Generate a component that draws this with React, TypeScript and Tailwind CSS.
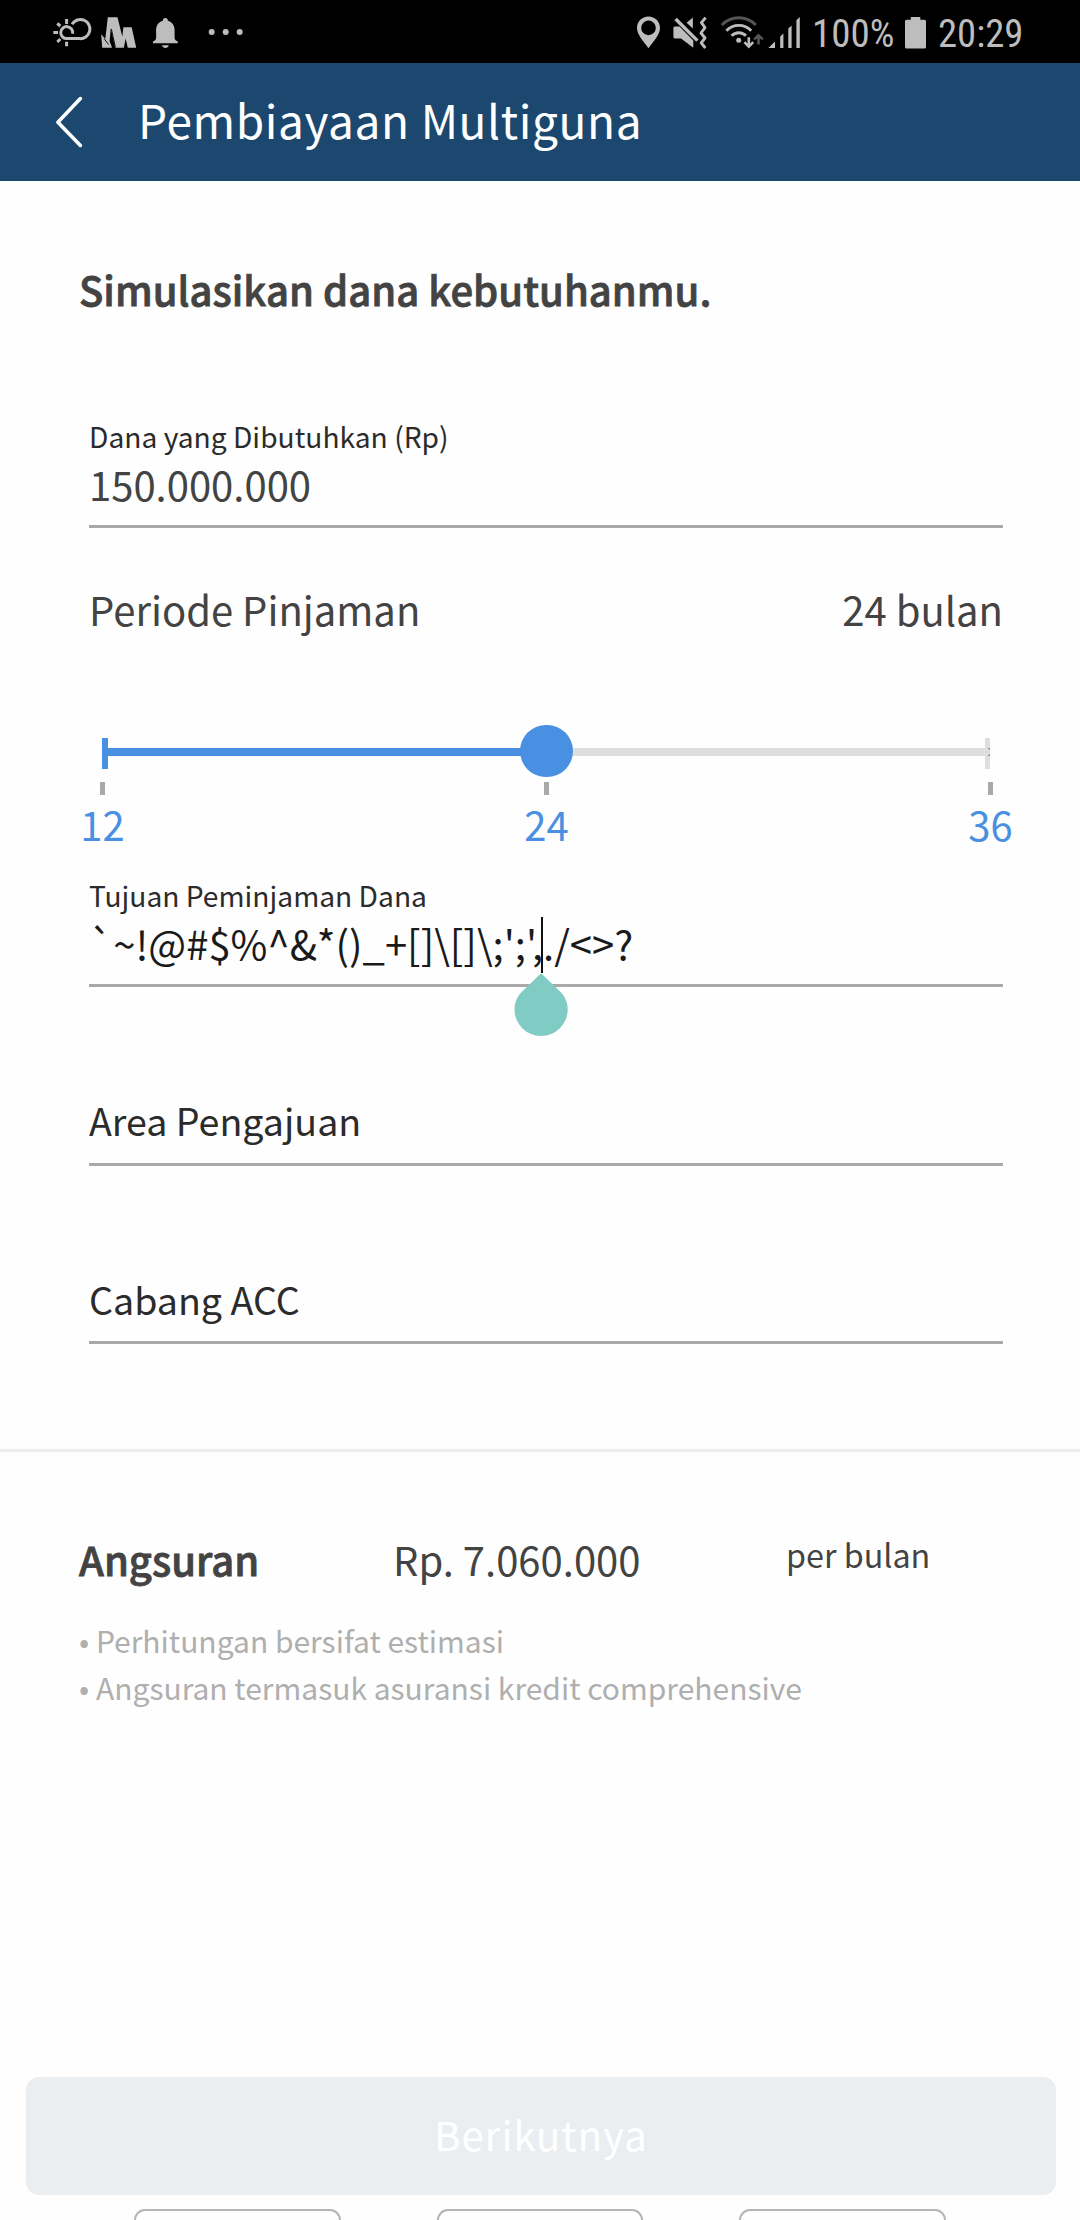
import React from "react";

const BLUE = "#4a90e2";

function StatusLeftIcons() {
  return (
    <svg width="200" height="63" viewBox="50 0 200 63" fill="#bdbdbd">
      {/* weather: sun behind cloud */}
      <g fill="none" stroke="#bdbdbd" strokeWidth="3">
        <path d="M72 24.3 A9.6 9.6 0 1 1 79.2 38.6 H67 A6 6 0 1 1 72.6 33.8" />
        <path d="M66.6 19 V24 M53.3 32.6 H58 M57.3 23.3 L60.3 26.2 M57.3 42 L60.3 39 M66.6 41.7 V46.3" />
      </g>
      {/* stylised peaks */}
      <path d="M101.2 34.3 L105.3 39 L107.8 17.2 H117.5 L122.3 36.8 L123.4 27.2 H131.7 L136.2 47.8 H127.8 L125.6 38.5 L123.9 47.8 H115.2 L110.8 28 L109.6 41 L112 47.8 H102.2 Z" />
      <path d="M104 38.6 L108.6 44.5" stroke="#000" strokeWidth="0.9" />
      <path d="M111.4 29 L115.4 47.5" stroke="#000" strokeWidth="0.9" />
      {/* bell */}
      <path d="M165.3 18 C166.9 18 167.9 19.2 167.9 20.7 C172 21.8 174.6 25.2 174.6 30 V37.8 C174.6 39.6 175.6 40.8 177.8 41.6 V43.2 H153 V41.6 C155.1 40.8 156.1 39.6 156.1 37.8 V30 C156.1 25.2 158.7 21.8 162.8 20.7 C162.8 19.2 163.8 18 165.3 18 Z" />
      <path d="M162 45.2 H168.8 C168.3 47 167 48 165.4 48 C163.8 48 162.5 47 162 45.2 Z" />
      <circle cx="211.7" cy="32.1" r="3" />
      <circle cx="225.7" cy="32.1" r="3" />
      <circle cx="239.7" cy="32.1" r="3" />
    </svg>
  );
}

function StatusRightIcons() {
  return (
    <svg width="170" height="63" viewBox="632 0 170 63" fill="#bdbdbd">
      {/* location pin */}
      <path
        fillRule="evenodd"
        d="M647.5 16.4 C654 16.4 659 21.4 659 27.8 C659 34.6 653.5 40.2 647.5 48.3 C641.5 40.2 636 34.6 636 27.8 C636 21.4 641 16.4 647.5 16.4 Z M647.5 20.6 A7.3 7.3 0 1 0 647.5 35.2 A7.3 7.3 0 1 0 647.5 20.6 Z"
      />
      {/* muted speaker with vibration */}
      <path d="M674 26.6 H678.5 L692.3 40.4 V47.8 L680 38.4 H674 C673 38.4 672.4 37.8 672.4 36.8 V28.2 C672.4 27.2 673 26.6 674 26.6 Z" />
      <path d="M685.6 22.8 L691.9 17.4 V28.6 Z" />
      <path d="M674.6 19 L696.4 40.6" stroke="#bdbdbd" strokeWidth="3.4" />
      <path
        d="M704.6 17.6 L700.4 22.6 L704 27.6 L700 33 L704 38 L700.2 42.8 L704.4 48"
        fill="none"
        stroke="#bdbdbd"
        strokeWidth="2.9"
        strokeLinejoin="round"
      />
      {/* wifi with traffic arrows */}
      <g fill="none" stroke="#bdbdbd" strokeWidth="2.9">
        <path d="M720.8 25 A23.5 23.5 0 0 1 754.8 25" stroke="#555555" />
        <path d="M725.4 30.7 A17 17 0 0 1 750.2 30.7" />
        <path d="M730.6 35.8 A10 10 0 0 1 745 35.8" />
        <path d="M747.8 37.2 V46 M743.4 42.2 L747.8 46.6 L752.2 42.2" strokeWidth="2.6" />
        <path d="M757.5 44.6 V36 M753.2 39.4 L757.5 35.2 L761.8 39.4" stroke="#555555" strokeWidth="2.6" />
      </g>
      <circle cx="737.7" cy="40.2" r="2.5" />
      {/* mobile signal */}
      <path d="M767.3 48 L774 41.6 V48 Z M779.2 36.6 L782.4 33.6 V48 H779.2 Z M787.3 28.6 L790.6 25.6 V48 H787.3 Z M795.4 20.2 L798.8 17 V48 H795.4 Z" />
    </svg>
  );
}

function StatusBar() {
  return (
    <div className="flex h-[63px] items-center bg-black pl-[50px] text-[#bdbdbd]">
      <StatusLeftIcons />
      <div className="ml-auto flex items-center pr-[60px]">
        <StatusRightIcons />
        <span className="ml-[9px] w-[93px] pt-[6px] font-['Roboto_Condensed','Roboto',sans-serif] text-[39px] leading-none">
          100%
        </span>
        <svg width="22" height="63" viewBox="904 0 22 63" fill="#bdbdbd" className="mr-[11px]">
          <path d="M909.8 17 H919.3 V19.8 H923.5 Q925 19.8 925 21.3 V47 Q925 48.6 923.5 48.6 H905.5 Q904 48.6 904 47 V21.3 Q904 19.8 905.5 19.8 H909.8 Z" />
        </svg>
        <span className="w-[82px] pt-[6px] font-['Roboto_Condensed','Roboto',sans-serif] text-[38.7px] leading-none">
          20:29
        </span>
      </div>
    </div>
  );
}

function Header() {
  return (
    <header className="flex h-[118px] items-center bg-[#1c4870] pl-[54px] text-white">
      <svg width="32" height="56" viewBox="54 94 32 56" fill="none" className="block">
        <path
          d="M80.4 98.6 L57.9 122.2 L80.4 145.4"
          stroke="#fff"
          strokeWidth="3.6"
          strokeLinecap="round"
          strokeLinejoin="round"
        />
      </svg>
      <h1 className="-mt-[7px] ml-[52px] text-[46px] leading-[68px] font-normal tracking-[0.6px]">
        Pembiayaan Multiguna
      </h1>
    </header>
  );
}

function FilledField({ label, children }: { label: string; children: React.ReactNode }) {
  return (
    <div className="flex h-[112px] flex-col border-b-[3px] border-[#a9a9a9]">
      <span className="text-[28.2px] leading-[40px] text-[#2b2b2b]">{label}</span>
      <div className="mt-[3px] text-[40px] leading-[50px] whitespace-nowrap">{children}</div>
    </div>
  );
}

function EmptyField({ label, className }: { label: string; className: string }) {
  return (
    <div
      className={`border-b-[3px] border-[#a9a9a9] text-[37.6px] leading-[50px] text-[#2b2b2b] ${className}`}
    >
      {label}
    </div>
  );
}

function Slider() {
  return (
    <div className="-mr-[12px] -ml-[11px] pt-[86px]">
      <div className="relative mr-[25px] ml-[24px] flex h-[52px] items-start">
        <div className="mt-[13px] h-[31px] w-[6px] bg-[#4a90e2]" />
        <div className="mt-[23px] h-[8px] w-[438px] bg-[#4a90e2]" />
        <div className="mt-[23px] h-[8px] flex-1 bg-[#dedede]" />
        <div className="mt-[13px] h-[31px] w-[5px] bg-[#dedede] pt-[10px]">
          <svg width="5" height="8" viewBox="0 0 5 8" className="block" fill={BLUE}>
            <path d="M2.6 0 H5 V2 Z M2.6 8 H5 V6 Z" />
          </svg>
        </div>
        <div className="absolute top-0 left-[418px] h-[52px] w-[53px] rounded-full bg-[#4a90e2]" />
      </div>
      <div className="mt-[5px] flex justify-between text-[40px] leading-[50px] text-[#4a90e2]">
        {["12", "24", "36"].map((n) => (
          <div key={n} className="flex w-[49px] flex-col items-center">
            <div className="h-[13px] w-[5px] bg-[#a9a9a9]" />
            <span className="mt-[4px]">{n}</span>
          </div>
        ))}
      </div>
    </div>
  );
}

export default function App() {
  return (
    <div className="flex h-[2220px] w-[1080px] flex-col overflow-hidden bg-[#fefefe] font-['Noto_Sans_CJK_JP','Noto_Sans',sans-serif] text-[#434343]">
      <StatusBar />
      <Header />

      <main className="flex flex-col pt-[78px]">
        <h2 className="pl-[79px] text-[40px] leading-[60px] font-medium tracking-[0.04px] [-webkit-text-stroke:0.8px_#434343]">
          Simulasikan dana kebutuhanmu.
        </h2>

        <section className="mt-[97px] mr-[77px] ml-[89px] flex flex-col">
          <FilledField label="Dana yang Dibutuhkan (Rp)">150.000.000</FilledField>

          <div className="mt-[51px] flex justify-between text-[40px] leading-[60px]">
            <span>Periode Pinjaman</span>
            <span>24 bulan</span>
          </div>

          <Slider />

          <div className="relative mt-[26px]">
            <FilledField label="Tujuan Peminjaman Dana">
              <span className="text-[#1a1a1a]">{"`~!@#$%^&*()_+[]\\[]\\;';',./<>?"}</span>
            </FilledField>
            {/* text caret and its drag handle */}
            <div className="absolute top-[42px] left-[452px] h-[56px] w-[2px] bg-[#111111]" />
            <svg
              width="54"
              height="64"
              viewBox="513.5 973 54 64"
              className="absolute top-[98px] left-[424.5px]"
              fill="#80cbc4"
            >
              <path d="M540.6 973.3 L560.3 992.2 C565 997.2 567.2 1003.2 567.2 1009.4 A26.6 26.6 0 0 1 514 1009.4 C514 1003.2 516.2 997.2 520.9 992.2 Z" />
            </svg>
          </div>

          <EmptyField label="Area Pengajuan" className="mt-[108px] h-[71px]" />
          <EmptyField label="Cabang ACC" className="mt-[108px] h-[70px]" />
        </section>

        <div className="mt-[105px] h-[3px] bg-[#ececec]" />

        <section className="mt-[77px] pl-[79px]">
          <div className="flex text-[40px] leading-[60px]">
            <span className="w-[314px] font-medium [-webkit-text-stroke:0.8px_#434343]">Angsuran</span>
            <span className="w-[393px]">Rp. 7.060.000</span>
            <span className="-mt-[5px] text-[32.3px]">per bulan</span>
          </div>
          <ul className="mt-[28px] text-[30px] leading-[47px] text-[#afafaf]">
            <li>• Perhitungan bersifat estimasi</li>
            <li>• Angsuran termasuk asuransi kredit comprehensive</li>
          </ul>
        </section>
      </main>

      <footer className="mt-auto flex h-[143px] shrink-0 flex-col">
        <button className="mr-[24px] ml-[26px] h-[118px] rounded-[13px] bg-[#eaeef1] pb-[4px] text-[40px] leading-[60px] tracking-[1.1px] text-white">
          Berikutnya
        </button>
        <div className="mt-[14px] ml-[134px] flex h-[11px] gap-[96px] overflow-hidden">
          {[0, 1, 2].map((i) => (
            <div key={i} className="h-[60px] w-[206.5px] shrink-0 rounded-[11px] border-2 border-[#b5b5b5]" />
          ))}
        </div>
      </footer>
    </div>
  );
}
